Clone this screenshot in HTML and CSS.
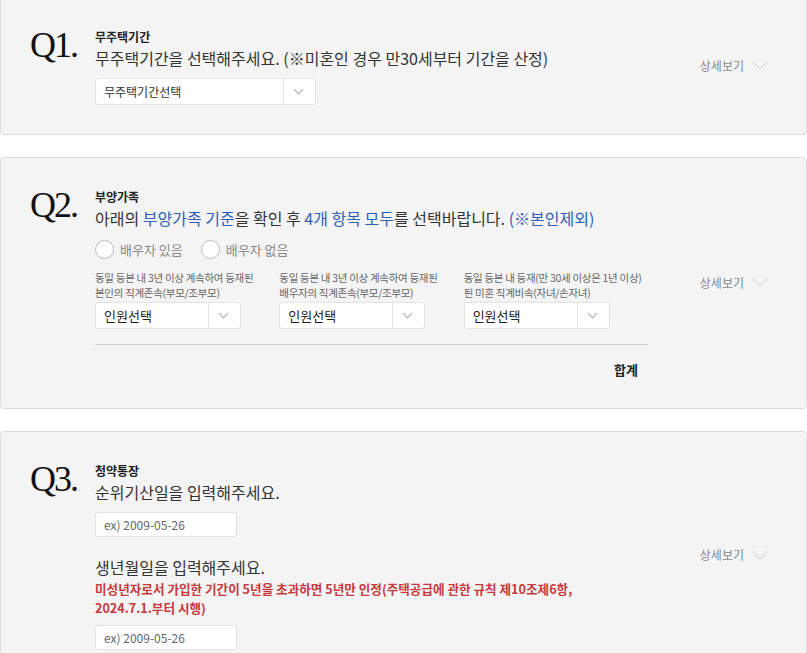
FILE: index.html
```html
<!DOCTYPE HTML>
<html>
<head>
    <meta charset="UTF-8">
    <title>청약 가점 계산</title>
    <link rel="stylesheet" href="styles.css">
</head>
<body>
<div id="wrap">

    <div class="card first">
        <div class="qno">Q1.</div>
        <div class="body">
            <h3 class="tit">무주택기간</h3>
            <p class="ask">무주택기간을 선택해주세요. (※미혼인 경우 만30세부터 기간을 산정)</p>
            <div class="sel w220"><span>무주택기간선택</span><i class="arr"></i></div>
        </div>
        <div class="more">상세보기<i class="down"></i></div>
    </div>

    <div class="card">
        <div class="qno">Q2.</div>
        <div class="body">
            <h3 class="tit">부양가족</h3>
            <p class="ask">아래의 <em>부양가족 기준</em>을 확인 후 <em>4개 항목 모두</em>를 선택바랍니다. <em>(※본인제외)</em></p>
            <div class="radios">
                <label><i class="rd"></i>배우자 있음</label>
                <label><i class="rd"></i>배우자 없음</label>
            </div>
            <ul class="cols">
                <li>
                    <p class="lab">동일 등본 내 3년 이상 계속하여 등재된<br>본인의 직계존속(부모/조부모)</p>
                    <div class="sel big"><span>인원선택</span><i class="arr"></i></div>
                </li>
                <li>
                    <p class="lab">동일 등본 내 3년 이상 계속하여 등재된<br>배우자의 직계존속(부모/조부모)</p>
                    <div class="sel big"><span>인원선택</span><i class="arr"></i></div>
                </li>
                <li>
                    <p class="lab">동일 등본 내 등재(만 30세 이상은 1년 이상)<br>된 미혼 직계비속(자녀/손자녀)</p>
                    <div class="sel big"><span>인원선택</span><i class="arr"></i></div>
                </li>
            </ul>
            <div class="sum">합계</div>
        </div>
        <div class="more">상세보기<i class="down"></i></div>
    </div>

    <div class="card">
        <div class="qno">Q3.</div>
        <div class="body">
            <h3 class="tit">청약통장</h3>
            <p class="ask">순위기산일을 입력해주세요.</p>
            <div class="inp">ex) 2009-05-26</div>
            <p class="ask next">생년월일을 입력해주세요.</p>
            <p class="warn">미성년자로서 가입한 기간이 5년을 초과하면 5년만 인정(주택공급에 관한 규칙 제10조제6항,<br>2024.7.1.부터 시행)</p>
            <div class="inp">ex) 2009-05-26</div>
        </div>
        <div class="more">상세보기<i class="down"></i></div>
    </div>

</div>
</body>
</html>
```

FILE: styles.css
```css
body{margin:0;background:#fff;font-family:"Noto Sans CJK KR","Noto Sans",sans-serif;color:#333;}
h3,p,ul,li{margin:0;padding:0;list-style:none;}
em{font-style:normal;}

#wrap{
    display: flex;
    flex-direction: column;
    gap: 22px;
    height: 653px;
    overflow: hidden;
}
.card{
    display: flex;
    flex: none;
    padding: 31px 38px 29px 29px;
    background: #f4f4f4;
    border: 1px solid #dcdcdc;
    border-radius: 4px;
}
.card.first{
    padding-top: 29px;
    padding-bottom: 29px;
    border-top: 0;
    border-radius: 0 0 4px 4px;
}
.qno{
    flex: none;
    width: 65px;
    margin-top: -2px;
    font-family: "Liberation Serif",serif;
    font-size: 36px;
    line-height: 36px;
    letter-spacing: -2px;
    color: #111;
}
.body{
    flex: 1;
}
.tit{
    font-size: 12px;
    line-height: 16px;
    font-weight: bold;
    color: #222;
}
.ask{
    margin-top: 2px;
    font-size: 16px;
    line-height: 22px;
    color: #333;
}
.ask em{
    color: #2f5fb5;
}
.ask.next{
    margin-top: 19px;
}
.sel{
    display: flex;
    align-items: center;
    width: 146px;
    height: 27px;
    margin-top: 9px;
    background: #fff;
    border: 1px solid #e2e2e2;
    border-radius: 3px;
    box-sizing: border-box;
    font-size: 12px;
    color: #333;
}
.sel.w220{
    width: 221px;
}
.sel span{
    flex: 1;
    padding-left: 8px;
}
.sel.big span{
    font-size: 13px;
    color: #222;
}
.sel .arr{
    position: relative;
    width: 31px;
    height: 100%;
    border-left: 1px solid #e2e2e2;
}
.sel .arr:after{
    content: "";
    position: absolute;
    left: 11px;
    top: 7px;
    width: 6px;
    height: 6px;
    border-right: 1px solid #aaa;
    border-bottom: 1px solid #aaa;
    transform: rotate(45deg);
}
.sel.big{
    margin-top: 2px;
}

.radios{
    display: flex;
    gap: 18px;
    margin-top: 10px;
    height: 20px;
}
.radios label{
    display: flex;
    align-items: center;
    gap: 6px;
    font-size: 13px;
    color: #888;
}
.radios .rd{
    width: 17px;
    height: 17px;
    background: #fff;
    border: 1px solid #bbb;
    border-radius: 50%;
}
.cols{
    display: flex;
    width: 553px;
    margin-top: 11px;
    padding-bottom: 15px;
    border-bottom: 1px solid #ccc;
}
.cols li{
    width: 184.5px;
}
.lab{
    font-size: 10.5px;
    line-height: 15px;
    color: #666;
    letter-spacing: -0.3px;
    white-space: nowrap;
}
.sum{
    width: 543px;
    margin-top: 16px;
    font-size: 13px;
    line-height: 18px;
    font-weight: bold;
    color: #222;
    text-align: right;
}

.inp{
    width: 142px;
    height: 25px;
    margin-top: 9px;
    padding-left: 8px;
    box-sizing: border-box;
    background: #fff;
    border: 1px solid #e2e2e2;
    border-radius: 3px;
    font-size: 12px;
    line-height: 23px;
    color: #666;
}
.warn{
    margin-top: 1px;
    font-size: 12.6px;
    line-height: 19px;
    font-weight: bold;
    color: #c63a3d;
}
.warn + .inp{
    margin-top: 8px;
}

.more{
    display: flex;
    align-items: center;
    align-self: center;
    flex: none;
    gap: 8px;
    margin-bottom: 4px;
    font-size: 12px;
    color: #888;
}
.more .down{
    width: 16px;
    height: 8px;
    background: linear-gradient(to top right,transparent 44%,#ccc 47%,#ccc 53%,transparent 56%) left/50% 100% no-repeat,
                linear-gradient(to top left,transparent 44%,#ccc 47%,#ccc 53%,transparent 56%) right/50% 100% no-repeat;
}
```
